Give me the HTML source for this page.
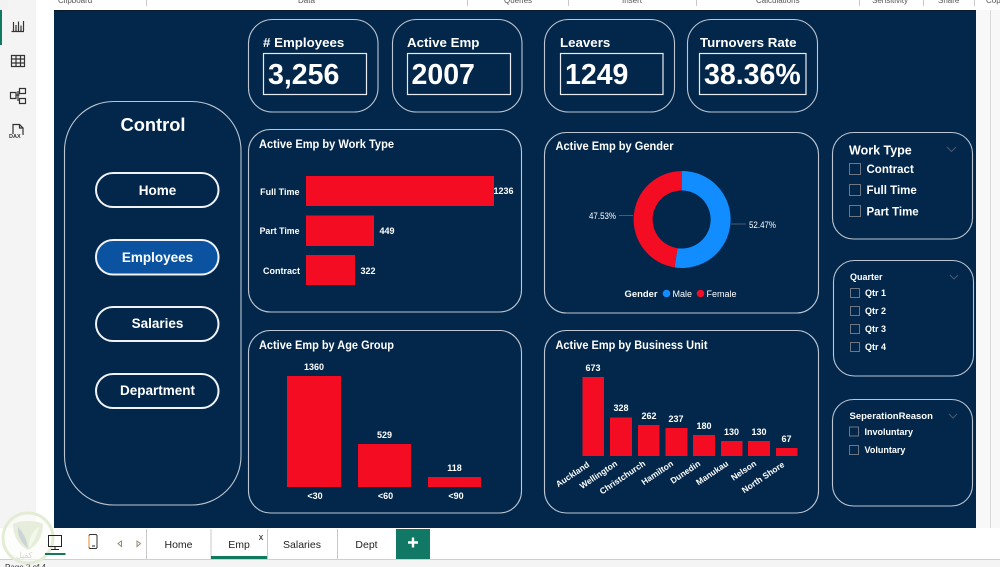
<!DOCTYPE html>
<html><head><meta charset="utf-8"><style>
html,body{margin:0;padding:0;background:#fff;width:1000px;height:567px;overflow:hidden}
svg{display:block}
text{font-family:"Liberation Sans",sans-serif;fill:#fff;font-weight:bold}
.c{fill:none;stroke:#bcc5d1;stroke-width:1.1}
.b{fill:#f40c22}
.t{font-size:12px}
.k{font-size:13.3px}
.v{font-size:28.5px}
.bx{fill:none;stroke:#e8ecf0;stroke-width:1.2}
.cb{fill:none;stroke:#6e7683;stroke-width:1}
.tab{font-weight:normal;fill:#222;font-size:10.5px}
.r{font-weight:normal;fill:#555;font-size:8px}
</style></head><body>
<svg width="1000" height="567" viewBox="0 0 1000 567" xmlns="http://www.w3.org/2000/svg">
<rect width="1000" height="567" fill="#fff"/>
<!-- sidebar -->
<rect x="0" y="0" width="36" height="528" fill="#f4f4f4"/>
<rect x="0" y="10" width="2" height="35" fill="#0f7a5f"/>
<rect x="976" y="10" width="24" height="518" fill="#f8f8f8"/>
<rect x="990" y="10" width="1" height="518" fill="#d8d8d8"/>
<!-- ribbon -->
<rect x="0" y="0" width="8" height="10" fill="#f2f2f2"/>
<g fill="#c8c8c8"><rect x="146" y="0" width="1" height="6"/><rect x="467" y="0" width="1" height="6"/><rect x="568" y="0" width="1" height="6"/><rect x="696" y="0" width="1" height="6"/><rect x="859" y="0" width="1" height="6"/><rect x="923" y="0" width="1" height="6"/><rect x="974" y="0" width="1" height="6"/></g>
<text class="r" x="58" y="3">Clipboard</text><text class="r" x="298" y="3">Data</text><text class="r" x="504" y="3">Queries</text><text class="r" x="622" y="3">Insert</text><text class="r" x="756" y="3">Calculations</text><text class="r" x="872" y="3">Sensitivity</text><text class="r" x="938" y="3">Share</text><text class="r" x="986" y="3">Copilot</text>
<!-- canvas -->
<rect x="54" y="10" width="922" height="518" fill="#03274b"/>
<rect x="54" y="10" width="922" height="1" fill="#0a1a2c"/>
<!-- side icons -->
<g fill="none" stroke="#333" stroke-width="1.2">
<path d="M11.500 31.500H24M13.500 31V22M16 31V25M18.500 31V21.500M21 31V25.500M23.500 31V21"/>
<path d="M11.500 55.500H24.500V66.500H11.500ZM11.500 59H24.500M11.500 63H24.500M16 55.500V66.500M20.500 55.500V66.500"/>
<path d="M10.500 92.500H16V98.500H10.500ZM19.500 88.500H25.500V93.500H19.500ZM19.500 98.500H25.500V103.500H19.500ZM16 95H19.500M18 91V101"/>
<path d="M13 134V124.500H19.500L23 128V135M19.500 124.500V128H23"/>
</g>
<text x="9" y="138" style="font-size:5.500px;fill:#333">DAX</text>
<!-- KPI cards -->
<rect class="c" x="248.500" y="19.500" width="129.500" height="92.500" rx="24"/>
<rect class="c" x="392.500" y="19.500" width="129.500" height="92.500" rx="24"/>
<rect class="c" x="544.500" y="19.500" width="130" height="92.500" rx="24"/>
<rect class="c" x="687.500" y="19.500" width="130" height="92.500" rx="24"/>
<text class="k" x="263" y="47"># Employees</text>
<text class="k" x="407" y="47">Active Emp</text>
<text class="k" x="560" y="47">Leavers</text>
<text class="k" x="700" y="47">Turnovers Rate</text>
<rect class="bx" x="263.500" y="53.500" width="103" height="41"/>
<rect class="bx" x="407.500" y="53.500" width="103" height="41"/>
<rect class="bx" x="560.500" y="53.500" width="102.500" height="41"/>
<rect class="bx" x="699.500" y="53.500" width="106.500" height="41"/>
<text class="v" x="268" y="84">3,256</text>
<text class="v" x="411.500" y="84">2007</text>
<text class="v" x="565" y="84">1249</text>
<text class="v" x="704" y="84">38.36%</text>
<!-- Control -->
<rect class="c" x="64.500" y="101.500" width="176.500" height="403.500" rx="49"/>
<text x="153" y="131" text-anchor="middle" style="font-size:18.300px">Control</text>
<g fill="none" stroke="#f0f2f5" stroke-width="2">
<rect x="96" y="173" width="122.500" height="34" rx="17"/>
<rect x="96" y="240" width="122.500" height="34.500" rx="17" fill="#0b53a0"/>
<rect x="96" y="307" width="122.500" height="34" rx="17"/>
<rect x="96" y="374" width="122.500" height="34" rx="17"/>
</g>
<g text-anchor="middle" style="font-size:13.500px">
<text x="157.500" y="195">Home</text>
<text x="157.500" y="262">Employees</text>
<text x="157.500" y="328">Salaries</text>
<text x="157.500" y="395">Department</text>
</g>
<!-- Work type chart -->
<rect class="c" x="248.500" y="129.500" width="273" height="182.500" rx="22"/>
<text class="t" x="259" y="148" textLength="135" lengthAdjust="spacingAndGlyphs">Active Emp by Work Type</text>
<rect class="b" x="306" y="176" width="188" height="30"/>
<rect class="b" x="306" y="215.500" width="68" height="30.500"/>
<rect class="b" x="306" y="255" width="49" height="30"/>
<g text-anchor="end" style="font-size:9px"><text x="299.500" y="195">Full Time</text><text x="299.500" y="234" style="font-size:8.800px">Part Time</text><text x="300" y="274">Contract</text></g>
<g style="font-size:9px"><text x="493.500" y="194">1236</text><text x="379.500" y="234">449</text><text x="360.500" y="274">322</text></g>
<!-- Age chart -->
<rect class="c" x="248.500" y="330.500" width="273" height="182.500" rx="22"/>
<text class="t" x="259" y="349" textLength="135" lengthAdjust="spacingAndGlyphs">Active Emp by Age Group</text>
<rect class="b" x="287" y="376" width="54" height="111"/>
<rect class="b" x="358" y="444" width="53" height="43"/>
<rect class="b" x="428" y="477" width="53" height="10"/>
<g text-anchor="middle" style="font-size:9px"><text x="314" y="370">1360</text><text x="384.500" y="438">529</text><text x="454.500" y="471">118</text><text x="315" y="499">&lt;30</text><text x="385.500" y="499">&lt;60</text><text x="456" y="499">&lt;90</text></g>
<!-- Gender -->
<rect class="c" x="544.500" y="132.500" width="274" height="180.500" rx="22"/>
<text class="t" x="555.500" y="150" textLength="118" lengthAdjust="spacingAndGlyphs">Active Emp by Gender</text>
<path d="M682 171A48.500 48.500 0 1 1 674.500 267.400L677.500 248.200A29 29 0 1 0 682 190.500Z" fill="#118dff"/>
<path d="M682 171A48.500 48.500 0 0 0 674.500 267.400L677.500 248.200A29 29 0 0 1 682 190.500Z" fill="#f40c22"/>
<path d="M619 215.500H633M731 224H746" stroke="#4a5a70" stroke-width="1" fill="none"/>
<text x="589" y="219" textLength="27" lengthAdjust="spacingAndGlyphs" style="font-weight:normal;font-size:9px">47.53%</text><text x="749" y="228" textLength="27" lengthAdjust="spacingAndGlyphs" style="font-weight:normal;font-size:9px">52.47%</text>
<text x="624.500" y="297" textLength="33" lengthAdjust="spacingAndGlyphs" style="font-size:9px">Gender</text><text x="672.500" y="297" style="font-weight:normal;font-size:9px">Male</text><text x="706.500" y="297" style="font-weight:normal;font-size:9px">Female</text>
<circle cx="666.500" cy="293.500" r="3.800" fill="#118dff"/><circle cx="700.500" cy="293.500" r="3.800" fill="#f40c22"/>
<!-- Business unit -->
<rect class="c" x="544.500" y="330.500" width="274" height="182.500" rx="22"/>
<text class="t" x="555.500" y="349" textLength="152" lengthAdjust="spacingAndGlyphs">Active Emp by Business Unit</text>
<rect class="b" x="582.500" y="377" width="21.500" height="79"/>
<rect class="b" x="610" y="417.500" width="22" height="38.500"/>
<rect class="b" x="638" y="425" width="21.500" height="31"/>
<rect class="b" x="665.500" y="428" width="22" height="28"/>
<rect class="b" x="693" y="435" width="22" height="21"/>
<rect class="b" x="721" y="441" width="21.500" height="15"/>
<rect class="b" x="748" y="441" width="22" height="15"/>
<rect class="b" x="776" y="448" width="21.500" height="8"/>
<g text-anchor="middle" style="font-size:9px"><text x="593" y="371">673</text><text x="621" y="411">328</text><text x="649" y="419">262</text><text x="676" y="422">237</text><text x="704" y="429">180</text><text x="731.500" y="435">130</text><text x="759" y="435">130</text><text x="786.500" y="442">67</text></g>
<g text-anchor="end" style="font-size:8.500px">
<text transform="translate(590,466) rotate(-34)">Auckland</text>
<text transform="translate(618,465) rotate(-34)">Wellington</text>
<text transform="translate(646,465) rotate(-34)">Christchurch</text>
<text transform="translate(674,465) rotate(-34)">Hamilton</text>
<text transform="translate(701,465) rotate(-34)">Dunedin</text>
<text transform="translate(729,465) rotate(-34)">Manukau</text>
<text transform="translate(757,465) rotate(-34)">Nelson</text>
<text transform="translate(785,466) rotate(-34)">North Shore</text>
</g>
<!-- slicers -->
<rect class="c" x="832.500" y="132.500" width="140" height="106.500" rx="21"/>
<rect class="c" x="833.500" y="260.500" width="140" height="115.500" rx="21"/>
<rect class="c" x="832.500" y="399.500" width="140" height="106.500" rx="21"/>
<text x="849" y="154.500" style="font-size:12.500px">Work Type</text>
<path d="M947 147L951.500 151.500L956 147" fill="none" stroke="#4a5a70" stroke-width="1"/>
<rect class="cb" x="849.500" y="163.500" width="11" height="11"/><rect class="cb" x="849.500" y="184.500" width="11" height="11"/><rect class="cb" x="849.500" y="205.500" width="11" height="11"/>
<g style="font-size:11.500px"><text x="866.500" y="173">Contract</text><text x="866.500" y="194">Full Time</text><text x="866.500" y="215.500">Part Time</text></g>
<text x="850" y="280" style="font-size:9px">Quarter</text>
<path d="M950 275L954 279L958 275" fill="none" stroke="#4a5a70" stroke-width="1"/>
<rect class="cb" x="850.500" y="288.500" width="9" height="9"/><rect class="cb" x="850.500" y="306.500" width="9" height="9"/><rect class="cb" x="850.500" y="324.500" width="9" height="9"/><rect class="cb" x="850.500" y="342.500" width="9" height="9"/>
<g style="font-size:9px"><text x="865" y="296">Qtr 1</text><text x="865" y="314">Qtr 2</text><text x="865" y="332">Qtr 3</text><text x="865" y="350">Qtr 4</text></g>
<text x="849.500" y="419" style="font-size:9.500px">SeperationReason</text>
<path d="M949 414L953 418L957 414" fill="none" stroke="#4a5a70" stroke-width="1"/>
<rect class="cb" x="849.500" y="427" width="9" height="9"/><rect class="cb" x="849.500" y="445.500" width="9" height="9"/>
<g style="font-size:9px"><text x="864.500" y="435">Involuntary</text><text x="864.500" y="453">Voluntary</text></g>
<!-- bottom bar -->
<rect x="0" y="528" width="1000" height="31" fill="#fff"/>
<rect x="0" y="559" width="1000" height="1" fill="#cfcfcf"/>
<rect x="0" y="560" width="1000" height="7" fill="#f4f4f4"/>
<text x="5" y="570" style="font-weight:normal;fill:#333;font-size:8px">Page 2 of 4</text>
<rect x="146" y="529" width="1" height="30" fill="#c8c8c8"/><rect x="210.500" y="529" width="1" height="30" fill="#c8c8c8"/><rect x="267" y="529" width="1" height="30" fill="#c8c8c8"/><rect x="337" y="529" width="1" height="30" fill="#c8c8c8"/>
<rect x="211" y="556" width="56" height="3" fill="#0f7a5f"/>
<rect x="396" y="529" width="34" height="30" fill="#117865"/>
<path d="M413 537.500V547.500M408 542.500H418" stroke="#fff" stroke-width="2.400"/>
<text class="tab" x="178.500" y="548" text-anchor="middle">Home</text>
<text class="tab" x="239" y="548" text-anchor="middle">Emp</text>
<text x="261" y="540" text-anchor="middle" style="font-size:9px;fill:#111;font-weight:normal">x</text>
<text class="tab" x="302" y="548" text-anchor="middle">Salaries</text>
<text class="tab" x="366.500" y="548" text-anchor="middle">Dept</text>
<!-- watermark -->
<circle cx="28" cy="538" r="25" fill="#fbfcf8" fill-opacity=".6" stroke="#e3ecd5" stroke-width="3"/>
<path d="M13 524C20 520 36 520 43 524C43 536 37 546 28 550C19 546 13 536 13 524Z" fill="#e6eedb"/>
<path d="M18 527C24 533 27 541 28 548C22 544 17 536 18 527Z" fill="#ccd4d6"/>
<path d="M39 527C37 536 33 543 29 548C28 541 32 531 39 527Z" fill="#f4f7ec"/>
<text x="16" y="558" style="font-family:'Liberation Sans','Noto Sans CJK SC',sans-serif;font-weight:normal;font-size:8px;fill:#d5d8cf">كفيل</text>
<!-- view icons -->
<path d="M48.500 535.500H61.500V546.500H48.500ZM55 546.500V549M51 549.500H59" fill="none" stroke="#222" stroke-width="1"/>
<rect x="45" y="553" width="20.500" height="2" fill="#0f7a5f"/>
<rect x="89" y="534.500" width="8" height="14" rx="1.500" fill="none" stroke="#333" stroke-width="1"/>
<path d="M89 535.500V547.500" stroke="#e08a2a" stroke-width="1"/>
<path d="M92 546H95" stroke="#222" stroke-width="1"/>
<path d="M121.500 541L118 543.500L121.500 546.500ZM137 541L140.500 543.500L137 546.500Z" fill="none" stroke="#9a8a70" stroke-width="1"/>
</svg>
</body></html>
